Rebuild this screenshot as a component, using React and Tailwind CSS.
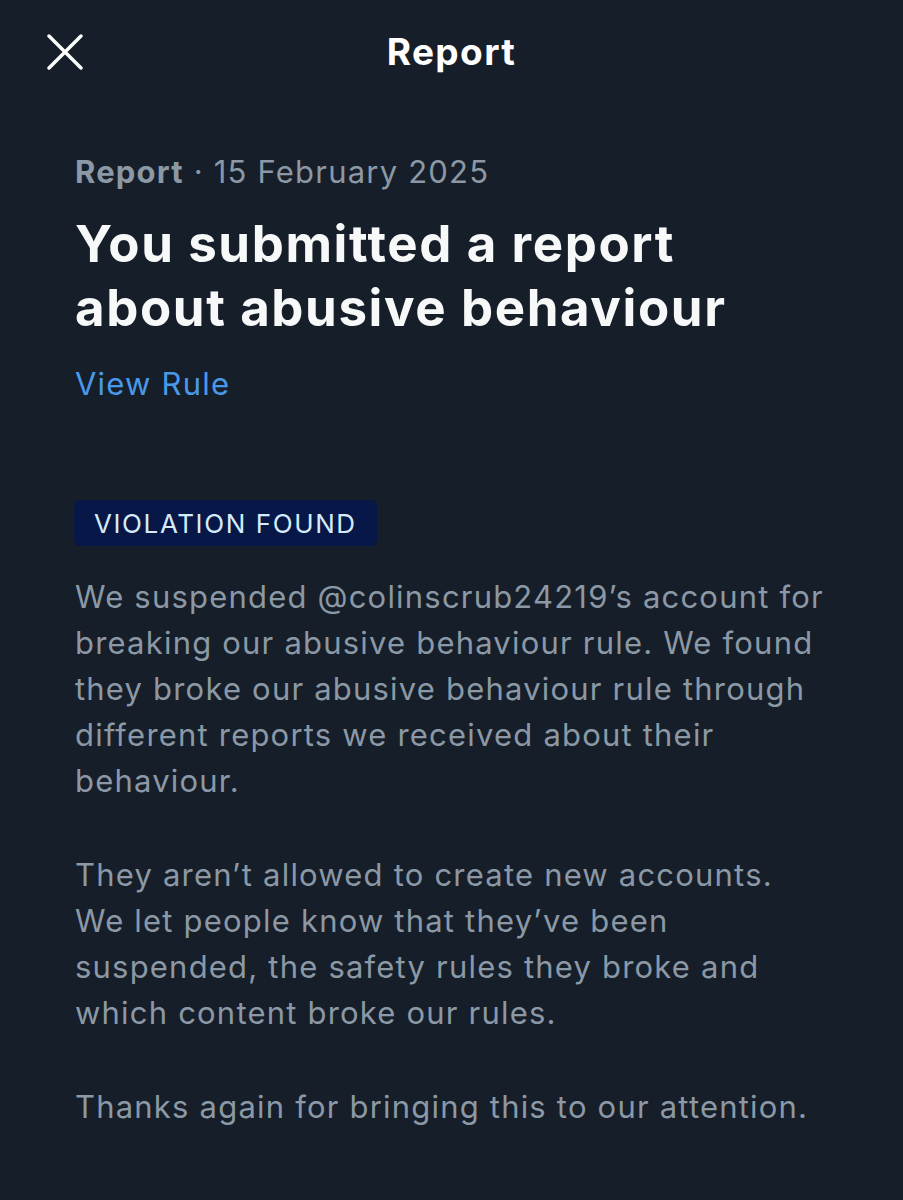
const FONT = { fontFamily: 'Inter, Roboto, "Liberation Sans", sans-serif' }

function CloseIcon() {
  return (
    <svg width="36" height="36" viewBox="0 0 36 36" fill="none" stroke="currentColor" strokeWidth="3.4" strokeLinecap="round">
      <path d="M2 2L34 34M34 2L2 34" />
    </svg>
  )
}

export default function App() {
  return (
    <div className="min-h-[1200px] w-full bg-[#161e29] text-white" style={FONT}>
      <header className="relative flex h-[104px] items-center justify-center">
        <button type="button" className="absolute left-[47px] top-[34px] text-white">
          <CloseIcon />
        </button>
        <h1 className="text-[37px] font-bold tracking-[1.4px]">Report</h1>
      </header>

      <main className="px-[75px] pt-[48px]">
        <div className="text-[31px] leading-[40px] tracking-[1.2px] text-[#8b98a5]">
          <span className="font-bold">Report</span> · 15 February 2025
        </div>
        <h2 className="mt-[20px] text-[51px] font-bold leading-[64px] tracking-[1.6px] text-[#f7f9f9]">
          You submitted a report
          <br />
          about abusive behaviour
        </h2>
        <a className="mt-[22px] block text-[31px] leading-[44px] tracking-[1.2px] text-[#4a99e9]">View Rule</a>

        <div className="-ml-px mt-[94px] inline-flex h-[46px] items-center rounded-[6px] bg-[#061748] px-[20px] text-[26px] tracking-[1.6px] text-[#d6ebfa]">
          VIOLATION FOUND
        </div>

        <div className="mt-[28px] space-y-[48px] whitespace-nowrap text-[31px] leading-[46px] tracking-[1.2px] text-[#8b98a5]">
          <p>
            We suspended @colinscrub24219’s account for
            <br />
            breaking our abusive behaviour rule. We found
            <br />
            they broke our abusive behaviour rule through
            <br />
            different reports we received about their
            <br />
            behaviour.
          </p>
          <p>
            They aren’t allowed to create new accounts.
            <br />
            We let people know that they’ve been
            <br />
            suspended, the safety rules they broke and
            <br />
            which content broke our rules.
          </p>
          <p>Thanks again for bringing this to our attention.</p>
        </div>
      </main>
    </div>
  )
}
